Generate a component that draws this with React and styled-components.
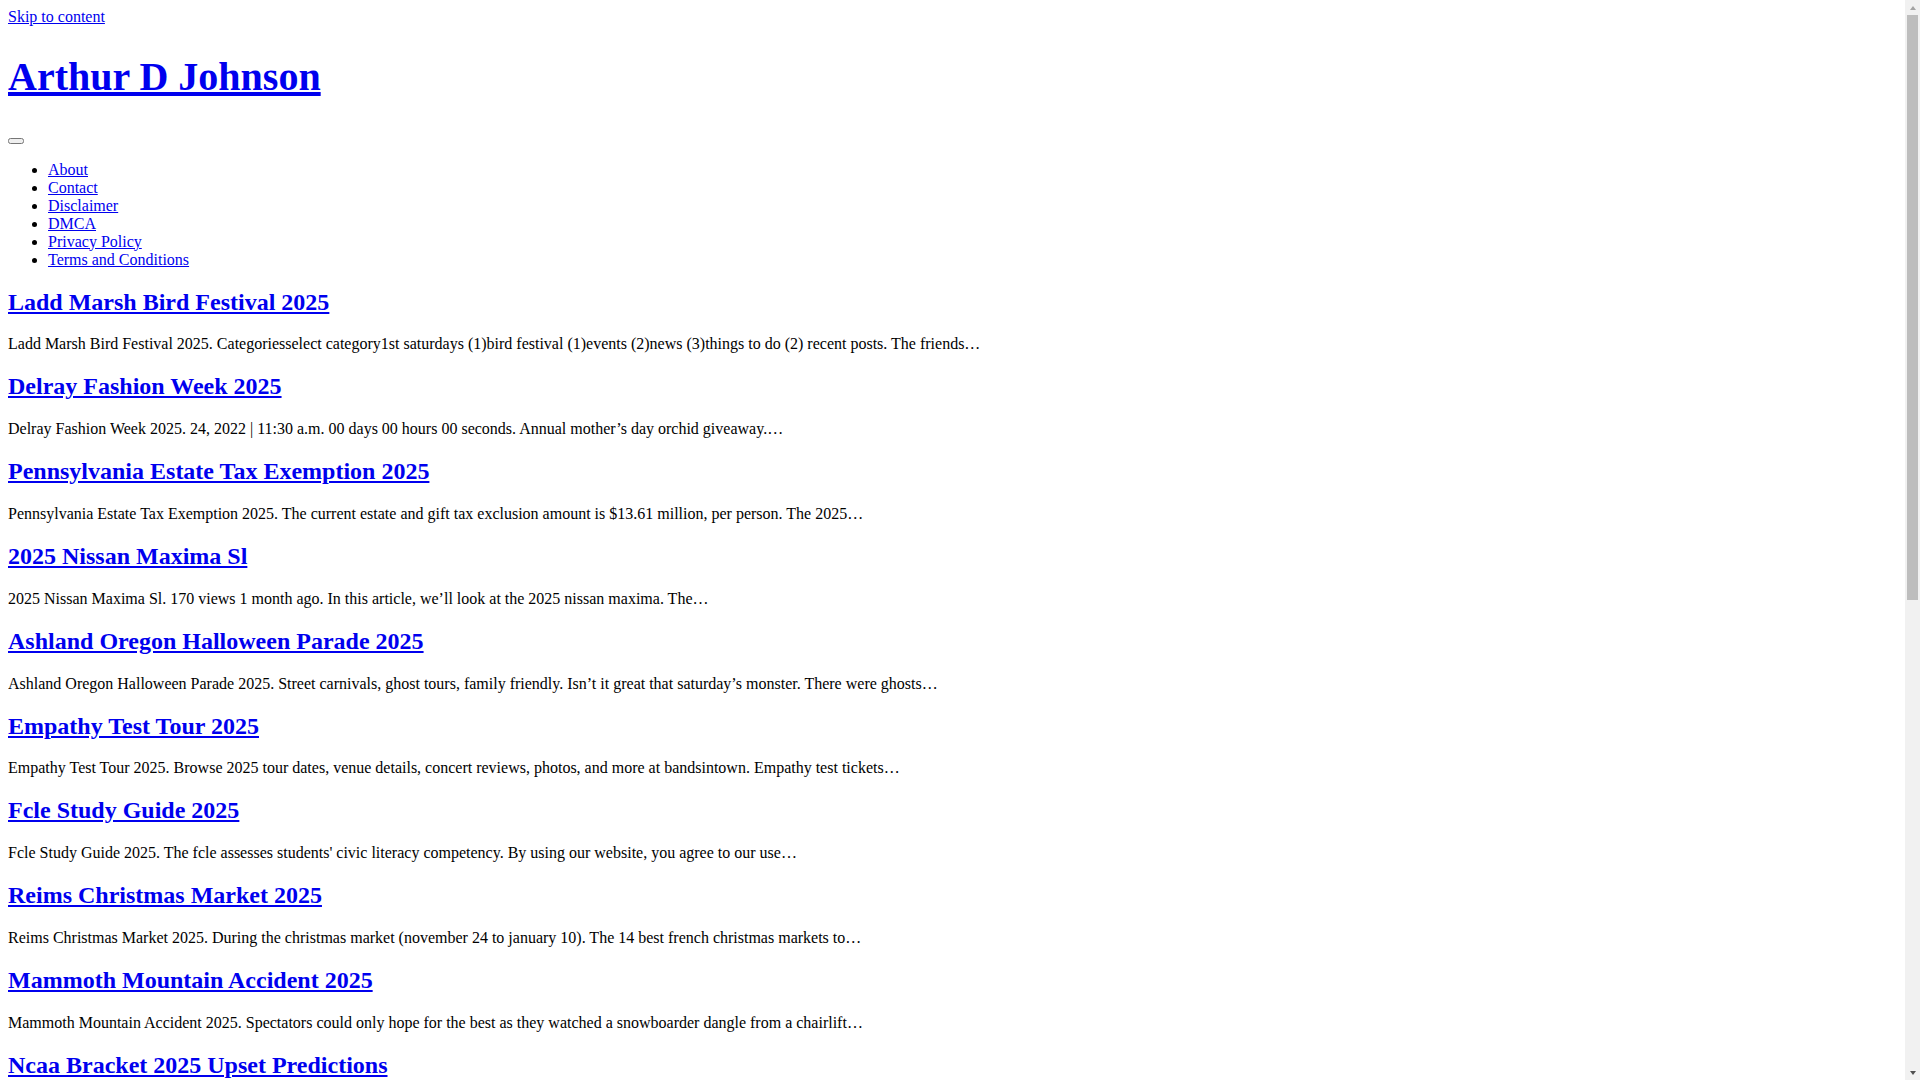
import React from "react";
import styled, { createGlobalStyle } from "styled-components";

const Global = createGlobalStyle`
  body {
    margin: 8px;
    font-family: "Liberation Serif", "Times New Roman", serif;
    font-size: 16px;
    color: #000;
    background: #fff;
  }
  a { color: #0000ee; }
`;

const SkipLink = styled.a`
  color: #0000ee;
  text-decoration: underline;
`;

const Header = styled.header`
  display: block;
`;

const SiteTitle = styled.h1`
  font-size: 40px;
  font-weight: bold;
  margin: 26.8px 0;
  a { color: #0000ee; }
`;

const Nav = styled.nav`
  display: block;
`;

const MenuToggle = styled.button`
  font: inherit;
  font-size: 13.33px;
`;

const Menu = styled.ul`
  margin: 16px 0;
  padding-left: 40px;
  list-style: disc;
`;

const MenuItem = styled.li`
  line-height: normal;
`;

const Main = styled.main`
  display: block;
`;

const Article = styled.article`
  display: block;
`;

const PostTitle = styled.h2`
  font-size: 24px;
  font-weight: bold;
  margin: 19.92px 0;
`;

const Excerpt = styled.p`
  margin: 16px 0;
`;

/* decorative browser scrollbar that sits over the right edge of the page */
const ScrollTrack = styled.div`
  position: fixed;
  top: 0;
  right: 0;
  width: 15px;
  height: 100vh;
  background: #f1f1f1;
  display: flex;
  flex-direction: column;
  pointer-events: none;
`;

const ScrollArrow = styled.div`
  height: 15px;
  flex: none;
  display: flex;
  align-items: center;
  justify-content: center;
  &::before {
    content: "";
    width: 0;
    height: 0;
    border-left: 3.5px solid transparent;
    border-right: 3.5px solid transparent;
    ${(p) =>
      p.$down
        ? "border-top: 4px solid #505050;"
        : "border-bottom: 4px solid #a3a3a3;"}
  }
`;

const ScrollThumb = styled.div`
  flex: none;
  height: 585px;
  margin: 0 2px;
  background: #bdbdbd;
`;

const ScrollRest = styled.div`
  flex: 1;
`;

const menu = ["About", "Contact", "Disclaimer", "DMCA", "Privacy Policy", "Terms and Conditions"];

const posts = [
  ["Ladd Marsh Bird Festival 2025", "Ladd Marsh Bird Festival 2025. Categoriesselect category1st saturdays (1)bird festival (1)events (2)news (3)things to do (2) recent posts. The friends…"],
  ["Delray Fashion Week 2025", "Delray Fashion Week 2025. 24, 2022 | 11:30 a.m. 00 days 00 hours 00 seconds. Annual mother’s day orchid giveaway.…"],
  ["Pennsylvania Estate Tax Exemption 2025", "Pennsylvania Estate Tax Exemption 2025. The current estate and gift tax exclusion amount is $13.61 million, per person. The 2025…"],
  ["2025 Nissan Maxima Sl", "2025 Nissan Maxima Sl. 170 views 1 month ago. In this article, we’ll look at the 2025 nissan maxima. The…"],
  ["Ashland Oregon Halloween Parade 2025", "Ashland Oregon Halloween Parade 2025. Street carnivals, ghost tours, family friendly. Isn’t it great that saturday’s monster. There were ghosts…"],
  ["Empathy Test Tour 2025", "Empathy Test Tour 2025. Browse 2025 tour dates, venue details, concert reviews, photos, and more at bandsintown. Empathy test tickets…"],
  ["Fcle Study Guide 2025", "Fcle Study Guide 2025. The fcle assesses students' civic literacy competency. By using our website, you agree to our use…"],
  ["Reims Christmas Market 2025", "Reims Christmas Market 2025. During the christmas market (november 24 to january 10). The 14 best french christmas markets to…"],
  ["Mammoth Mountain Accident 2025", "Mammoth Mountain Accident 2025. Spectators could only hope for the best as they watched a snowboarder dangle from a chairlift…"],
  ["Ncaa Bracket 2025 Upset Predictions", "Ncaa Bracket 2025 Upset Predictions. Our bracket picks for the biggest first round upsets in this year’s tournament. The…"],
  ["Lake Placid Ironman 2025", "Lake Placid Ironman 2025. Registration opens for the annual triathlon in the adirondacks. The race…"],
  ["Toyota Tacoma 2025 Release Date", "Toyota Tacoma 2025 Release Date. The next generation pickup arrives with new trims and features. The…"],
  ["Boston Marathon 2025 Results", "Boston Marathon 2025 Results. Find finishers, split times and qualifying standards for this year’s race. The…"],
  ["Chicago Auto Show 2025 Dates", "Chicago Auto Show 2025 Dates. The largest auto show in north america returns to mccormick place. Tickets…"],
  ["Summer Solstice 2025 Date", "Summer Solstice 2025 Date. The longest day of the year falls in june for the northern hemisphere. The…"],
  ["Texas Renaissance Festival 2025", "Texas Renaissance Festival 2025. Themed weekends, costumes, food and entertainment in todd mission. The…"],
  ["Detroit Pistons Schedule 2025", "Detroit Pistons Schedule 2025. Full season schedule with home and away games, tickets and more. The…"],
  ["Easter Sunday 2025 Date", "Easter Sunday 2025 Date. When is easter this year and how the date is calculated each spring. The…"],
  ["Hawaii Food And Wine Festival 2025", "Hawaii Food And Wine Festival 2025. Celebrated chefs and winemakers gather across the islands. The…"],
];

export default function App() {
  return (
    <>
      <Global />
      <SkipLink href="#content">Skip to content</SkipLink>
      <Header>
        <SiteTitle><a href="#">Arthur D Johnson</a></SiteTitle>
        <Nav>
          <MenuToggle aria-label="Menu" />
          <Menu>
            {menu.map((m) => (
              <MenuItem key={m}><a href="#">{m}</a></MenuItem>
            ))}
          </Menu>
        </Nav>
      </Header>
      <Main id="content">
        {posts.map(([t, e]) => (
          <Article key={t}>
            <PostTitle><a href="#">{t}</a></PostTitle>
            <Excerpt>{e}</Excerpt>
          </Article>
        ))}
      </Main>
      <ScrollTrack aria-hidden="true">
        <ScrollArrow />
        <ScrollThumb />
        <ScrollRest />
        <ScrollArrow $down />
      </ScrollTrack>
    </>
  );
}
